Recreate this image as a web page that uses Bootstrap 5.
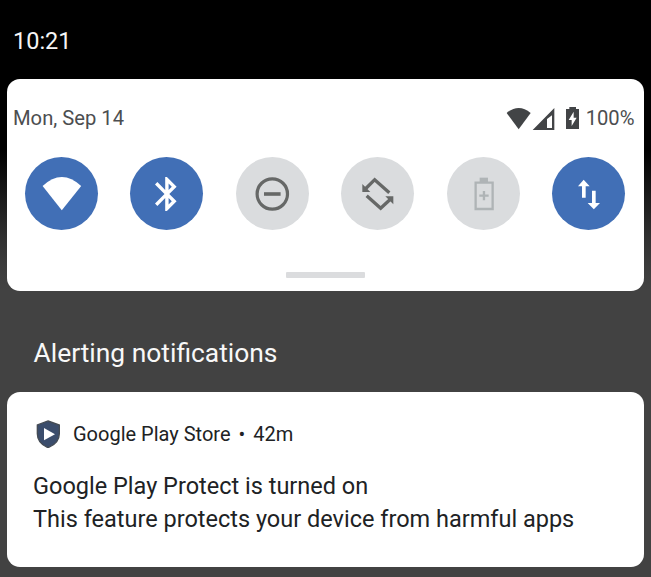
<!DOCTYPE html>
<html lang="en">
<head>
<meta charset="utf-8">
<meta name="viewport" content="width=device-width, initial-scale=1">
<title>Notification shade</title>
<link href="https://cdn.jsdelivr.net/npm/bootstrap@5.3.0/dist/css/bootstrap.min.css" rel="stylesheet">
<style>
body{font-family:Roboto,"Liberation Sans",sans-serif;background:#424242;overflow:hidden}
.shade{width:651px;height:577px;padding:0 7px;background:linear-gradient(#000 0,#000 150px,#1c1c1c 200px,#2f2f2f 235px,#3b3b3b 265px,#424242 290px)}
.clock{height:79px;padding:27px 0 0 6px;font-size:23.5px;line-height:28px;color:#f5f5f5}
.panel{border:0;border-radius:13px;background:#fff}
.quick{height:212px}
.status{height:30px;margin-top:24px;padding:0 9.5px 0 6px;font-size:20.2px;line-height:30px;color:#4c4e50}
.status svg{margin-right:3.5px}
.tiles{margin-top:24px;padding:0 18.5px 0 17.5px}
.tile{width:73px;height:73px;border-radius:50%;background:#dadcde;color:#666867}
.tile.on{background:#416fb6;color:#fff}
.tile.dim{color:#afb4b6}
.tile svg{display:block}
.handle{width:79px;height:6px;margin-top:42px;border-radius:1px;background:#dbdcde}
.section{height:101px;padding:46px 0 0 26.5px;font-size:26.4px;line-height:32px;color:#f8f8f8}
.note{height:175px;padding:28px 26px 0;color:#202224}
.source{height:29px;font-size:20px;line-height:29px}
.shield{margin:-2px 11px 0 1px}
.message{margin-top:21px;font-size:23.5px;line-height:33px}
</style>
</head>
<body>
<main class="shade">
  <div class="clock">10:21</div>
  <section class="card panel quick">
    <div class="status d-flex justify-content-between align-items-center">
      <span>Mon, Sep 14</span>
      <div class="d-flex align-items-center">
        <svg width="76" height="26" viewBox="78 102 228 78" fill="#424446" aria-hidden="true">
          <path d="M80 126Q116 96 152 126L116 175Z"/>
          <path fill-rule="evenodd" d="M158 177L223 111V177ZM201 144V171H216V133Z"/>
          <path d="M268 108h20v6h9v60h-39v-60h10z"/>
          <path fill="#fff" d="M281 122L266 147H275V165L290 140H281Z"/>
        </svg>
        <span>100%</span>
      </div>
    </div>
    <div class="tiles d-flex justify-content-between">
      <div class="tile on"><svg width="73" height="73" fill="currentColor"><path d="M17.600 29Q36.800 11 56.200 29L36.800 53.200Z"/></svg></div>
      <div class="tile on"><svg width="73" height="73" fill="currentColor"><path transform="translate(16.5 16.6) scale(1.7)" d="M17.71 7.71L12 2h-1v7.59L6.41 5 5 6.41 10.59 12 5 17.59 6.41 19 11 14.41V22h1l5.71-5.71-4.3-4.29 4.3-4.29zM13 5.83l1.88 1.88L13 9.59V5.83zm1.88 10.46L13 18.17v-3.76l1.88 1.88z"/></svg></div>
      <div class="tile"><svg width="73" height="73" fill="none" stroke="currentColor"><circle cx="36.3" cy="37" r="15.2" stroke-width="3.2"/><path d="M28 37h16.600" stroke-width="3.6"/></svg></div>
      <div class="tile"><svg width="73" height="73"><g transform="translate(-121 -12) scale(.33333)"><path fill="none" stroke="currentColor" stroke-width="10" d="M436 132L464 104L508 143M440 152L482 190L512 162"/><path fill="currentColor" d="M427 117V141H451ZM496 154H520V178Z"/></g></svg></div>
      <div class="tile dim"><svg width="73" height="73"><g transform="translate(-16.7 -12) scale(.33333)"><path fill="none" stroke="currentColor" stroke-width="7" d="M136 113H187V192H136ZM161 138V166M147 152H175"/><path fill="currentColor" d="M148 98h25v14h-25z"/></g></svg></div>
      <div class="tile on"><svg width="73" height="73" fill="currentColor"><g transform="translate(-122 -12) scale(.33333)"><path d="M461 104L479 124H467V158H456V124H444ZM486 137H497V174H510L491.500 193L473 174H486Z"/></g></svg></div>
    </div>
    <div class="handle mx-auto"></div>
  </section>
  <div class="section">Alerting notifications</div>
  <article class="card panel note">
    <div class="source d-flex align-items-center">
      <svg class="shield" width="28" height="29" viewBox="42 24 84 87" aria-hidden="true">
        <path fill="#3b4d6c" stroke="#454c54" stroke-width="4" d="M84 30L118 42V68Q118 96 84 110Q52 96 52 68V42Z"/>
        <path fill="#fff" d="M72 51V88L105 70Z"/>
      </svg>
      <span>Google Play Store</span><span class="px-2">•</span><span>42m</span>
    </div>
    <div class="message">
      <div>Google Play Protect is turned on</div>
      <div>This feature protects your device from harmful apps</div>
    </div>
  </article>
</main>
<script src="https://cdn.jsdelivr.net/npm/bootstrap@5.3.0/dist/js/bootstrap.bundle.min.js"></script>
</body>
</html>
